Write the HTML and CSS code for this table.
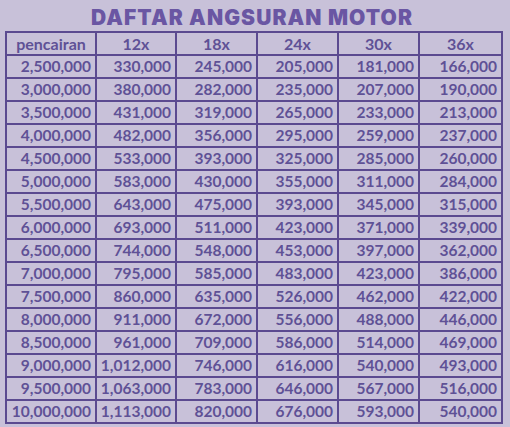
FILE: index.html
```html
<!DOCTYPE html>
<html lang="id">
<head>
<meta charset="utf-8">
<title>Daftar Angsuran Motor</title>
<link rel="stylesheet" href="styles.css">
</head>
<body>
<div class="page">
  <h1 class="title">DAFTAR ANGSURAN MOTOR</h1>
  <table class="grid">
    <colgroup>
      <col class="c1"><col class="c2"><col class="c3"><col class="c4"><col class="c5"><col class="c6">
    </colgroup>
    <thead>
      <tr><th>pencairan</th><th>12x</th><th>18x</th><th>24x</th><th>30x</th><th>36x</th></tr>
    </thead>
    <tbody>
      <tr><td>2,500,000</td><td>330,000</td><td>245,000</td><td>205,000</td><td>181,000</td><td>166,000</td></tr>
      <tr><td>3,000,000</td><td>380,000</td><td>282,000</td><td>235,000</td><td>207,000</td><td>190,000</td></tr>
      <tr><td>3,500,000</td><td>431,000</td><td>319,000</td><td>265,000</td><td>233,000</td><td>213,000</td></tr>
      <tr><td>4,000,000</td><td>482,000</td><td>356,000</td><td>295,000</td><td>259,000</td><td>237,000</td></tr>
      <tr><td>4,500,000</td><td>533,000</td><td>393,000</td><td>325,000</td><td>285,000</td><td>260,000</td></tr>
      <tr><td>5,000,000</td><td>583,000</td><td>430,000</td><td>355,000</td><td>311,000</td><td>284,000</td></tr>
      <tr><td>5,500,000</td><td>643,000</td><td>475,000</td><td>393,000</td><td>345,000</td><td>315,000</td></tr>
      <tr><td>6,000,000</td><td>693,000</td><td>511,000</td><td>423,000</td><td>371,000</td><td>339,000</td></tr>
      <tr><td>6,500,000</td><td>744,000</td><td>548,000</td><td>453,000</td><td>397,000</td><td>362,000</td></tr>
      <tr><td>7,000,000</td><td>795,000</td><td>585,000</td><td>483,000</td><td>423,000</td><td>386,000</td></tr>
      <tr><td>7,500,000</td><td>860,000</td><td>635,000</td><td>526,000</td><td>462,000</td><td>422,000</td></tr>
      <tr><td>8,000,000</td><td>911,000</td><td>672,000</td><td>556,000</td><td>488,000</td><td>446,000</td></tr>
      <tr><td>8,500,000</td><td>961,000</td><td>709,000</td><td>586,000</td><td>514,000</td><td>469,000</td></tr>
      <tr><td>9,000,000</td><td>1,012,000</td><td>746,000</td><td>616,000</td><td>540,000</td><td>493,000</td></tr>
      <tr><td>9,500,000</td><td>1,063,000</td><td>783,000</td><td>646,000</td><td>567,000</td><td>516,000</td></tr>
      <tr><td>10,000,000</td><td>1,113,000</td><td>820,000</td><td>676,000</td><td>593,000</td><td>540,000</td></tr>
    </tbody>
  </table>
</div>
</body>
</html>
```

FILE: styles.css
```css
html, body {
  margin: 0;
  padding: 0;
  background: #c8c1d9;
}

.page {
  width: 510px;
  height: 427px;
  overflow: hidden;
  background: #c8c1d9;
}

.title {
  margin: 0;
  height: 31px;
  padding: 8px 6px 0 0;
  box-sizing: border-box;
  text-align: center;
  font-family: "Inter", "Lato", sans-serif;
  font-weight: 900;
  font-size: 21px;
  line-height: 20px;
  letter-spacing: 1.1px;
  color: #6a56a3;
}

.grid {
  margin-left: 5px;
  border-collapse: collapse;
  table-layout: fixed;
  width: 496px;
  font-family: "Lato", "Liberation Sans", sans-serif;
  font-weight: 700;
  font-size: 15.5px;
  color: #5f5196;
}

.c1 { width: 90px; }
.c2 { width: 80px; }
.c3 { width: 81px; }
.c4 { width: 81px; }
.c5 { width: 81px; }
.c6 { width: 83px; }

.grid tr {
  height: 23px;
}

.grid th,
.grid td {
  border: 2px solid #5b4a90;
  padding: 0 4px 0 2px;
  line-height: 1;
  white-space: nowrap;
  overflow: hidden;
}

.grid th {
  text-align: center;
  font-weight: 700;
  font-size: 16px;
  padding: 0 2px;
}

.grid td {
  text-align: right;
}
```
